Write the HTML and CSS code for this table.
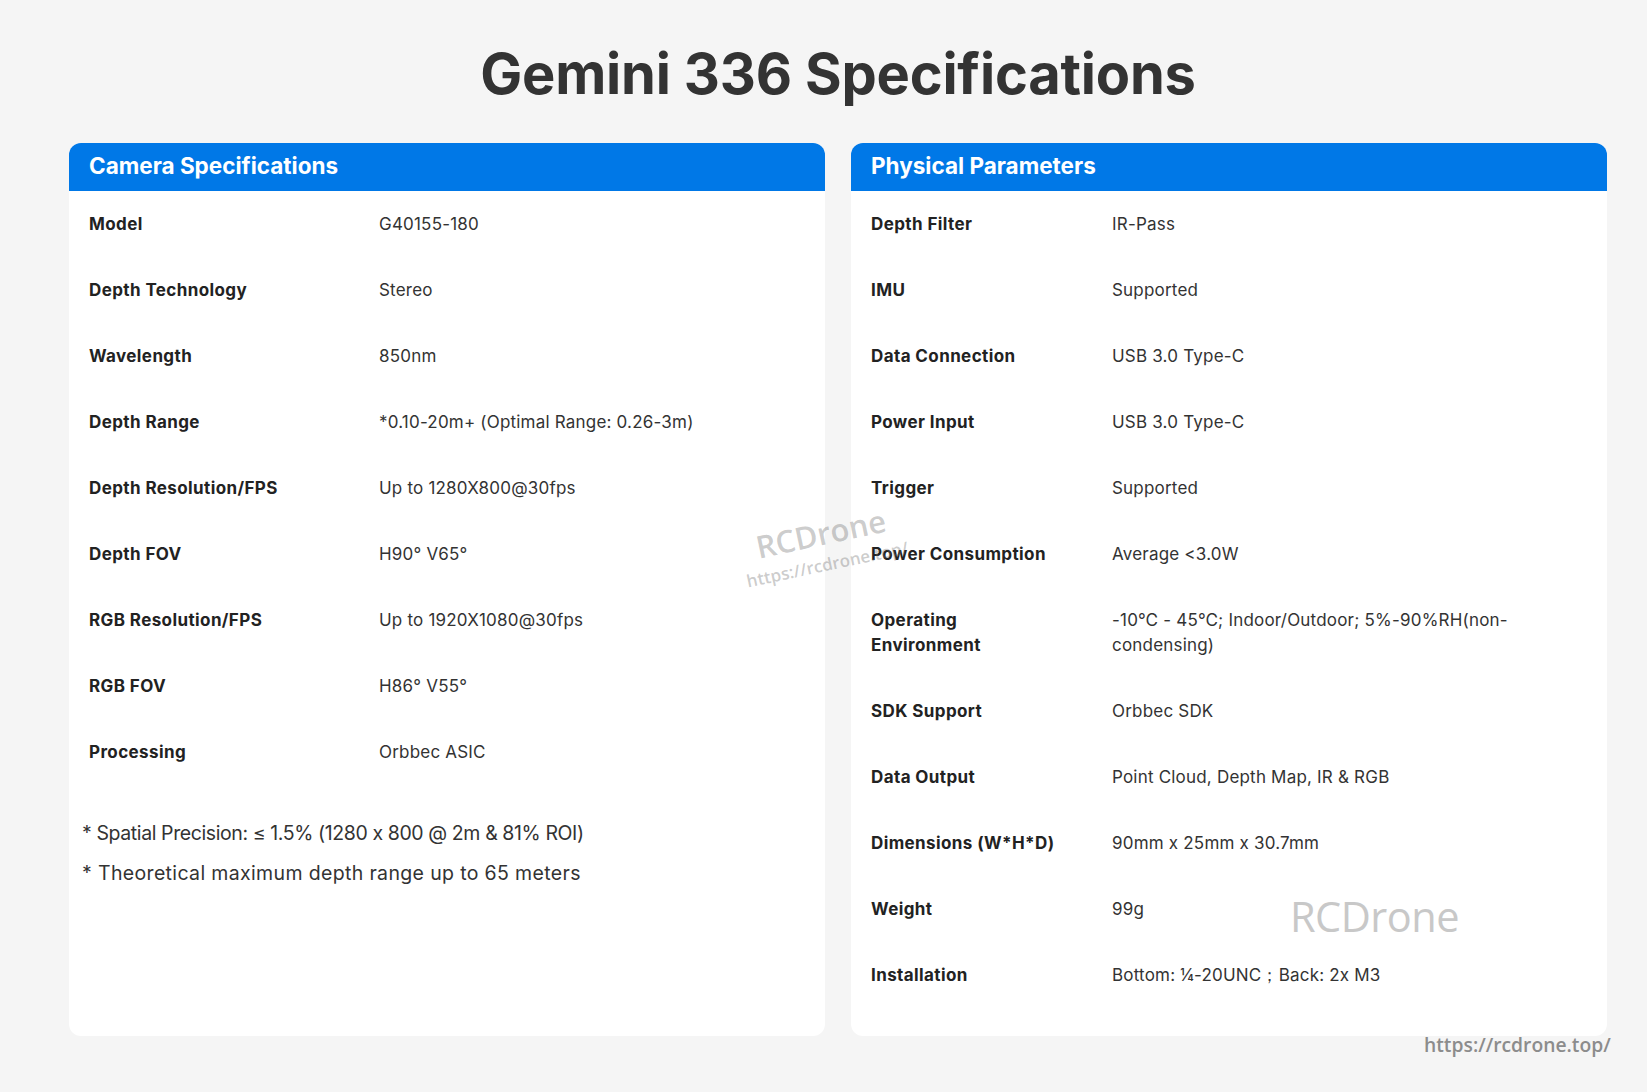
FILE: index.html
```html
<!DOCTYPE html>
<html lang="en">
<head>
<meta charset="utf-8">
<title>Gemini 336 Specifications</title>
<link rel="stylesheet" href="styles.css">
</head>
<body>
<div class="page">
  <h1 class="title">Gemini 336 Specifications</h1>
  <div class="cards">
    <section class="card card-camera">
      <h2 class="card-head">Camera Specifications</h2>
      <div class="spec">
        <div class="row"><div class="label">Model</div><div class="value">G40155-180</div></div>
        <div class="row"><div class="label">Depth Technology</div><div class="value">Stereo</div></div>
        <div class="row"><div class="label">Wavelength</div><div class="value">850nm</div></div>
        <div class="row"><div class="label">Depth Range</div><div class="value">*0.10-20m+ (Optimal Range: 0.26-3m)</div></div>
        <div class="row"><div class="label">Depth Resolution/FPS</div><div class="value">Up to 1280X800@30fps</div></div>
        <div class="row"><div class="label">Depth FOV</div><div class="value">H90° V65°</div></div>
        <div class="row"><div class="label">RGB Resolution/FPS</div><div class="value">Up to 1920X1080@30fps</div></div>
        <div class="row"><div class="label">RGB FOV</div><div class="value">H86° V55°</div></div>
        <div class="row"><div class="label">Processing</div><div class="value">Orbbec ASIC</div></div>
      </div>
      <div class="notes">
        <p class="note note-precision">* Spatial Precision: ≤ 1.5% (1280 x 800 @ 2m &amp; 81% ROI)</p>
        <p class="note note-range">* Theoretical maximum depth range up to 65 meters</p>
      </div>
    </section>
    <section class="card card-physical">
      <h2 class="card-head">Physical Parameters</h2>
      <div class="spec">
        <div class="row"><div class="label">Depth Filter</div><div class="value">IR-Pass</div></div>
        <div class="row"><div class="label">IMU</div><div class="value">Supported</div></div>
        <div class="row"><div class="label">Data Connection</div><div class="value">USB 3.0 Type-C</div></div>
        <div class="row"><div class="label">Power Input</div><div class="value">USB 3.0 Type-C</div></div>
        <div class="row"><div class="label">Trigger</div><div class="value">Supported</div></div>
        <div class="row"><div class="label">Power Consumption</div><div class="value">Average &lt;3.0W</div></div>
        <div class="row"><div class="label">Operating Environment</div><div class="value">-10℃ - 45℃; Indoor/Outdoor; 5%-90%RH(non-condensing)</div></div>
        <div class="row"><div class="label">SDK Support</div><div class="value">Orbbec SDK</div></div>
        <div class="row"><div class="label">Data Output</div><div class="value">Point Cloud, Depth Map, IR &amp; RGB</div></div>
        <div class="row"><div class="label">Dimensions (W*H*D)</div><div class="value">90mm x 25mm x 30.7mm</div></div>
        <div class="row"><div class="label">Weight</div><div class="value">99g</div></div>
        <div class="row"><div class="label">Installation</div><div class="value">Bottom: ¼-20UNC；Back: 2x M3</div></div>
      </div>
    </section>
  </div>
  <div class="wm wm-tilt">
    <span class="wm-tilt-name">RCDrone</span>
    <span class="wm-tilt-url">https://rcdrone.top/</span>
  </div>
  <div class="wm wm-name">RCDrone</div>
  <div class="wm wm-url">https://rcdrone.top/</div>
</div>
</body>
</html>
```
FILE: styles.css
```css
* { box-sizing: border-box; }
html, body { margin: 0; padding: 0; }
body {
  background: #f5f5f5;
  font-family: "Inter", "Open Sans", "DejaVu Sans", sans-serif;
  font-feature-settings: "calt" 0;
  color: #333;
  width: 1647px;
  height: 1092px;
  overflow: hidden;
}
.page {
  position: relative;
  height: 1092px;
  padding: 40px 40px 0 69px;
}
.title {
  margin: 0;
  text-align: center;
  font-size: 56px;
  line-height: 68px;
  font-weight: 700;
  color: #333;
  letter-spacing: -0.2px;
}
.cards {
  display: grid;
  grid-template-columns: 756px 756px;
  gap: 26px;
  margin-top: 35px;
}
.card {
  background: #fff;
  border-radius: 12px;
  overflow: hidden;
  height: 893px;
}
.card-head {
  margin: 0;
  height: 48px;
  display: flex;
  align-items: center;
  padding: 0 20px 3px;
  background: #0078e7;
  color: #fff;
  font-size: 22.5px;
  font-weight: 700;
}
.spec { display: flex; flex-direction: column; }
.row {
  display: grid;
  padding: 20.5px 20px;
  line-height: 25px;
  font-size: 17px;
}
.card-camera .row { grid-template-columns: 290px 1fr; }
.card-physical .row { grid-template-columns: 241px 1fr; }
.label { font-weight: 700; color: #222; padding-right: 20px; letter-spacing: 0.4px; }
.card-physical .label { padding-right: 44px; }
.value { font-weight: 400; color: #333; letter-spacing: 0.2px; }
.card-physical .value { max-width: 460px; }
.notes { padding: 28px 13px 0; }
.note {
  margin: 0;
  font-size: 19.5px;
  line-height: 40px;
  color: #333;
}
.note-precision { letter-spacing: -0.4px; }
.note-range { letter-spacing: 0.35px; }
.wm { position: absolute; font-family: "Open Sans", sans-serif; pointer-events: none; }
.wm-tilt {
  left: 741px;
  top: 516px;
  display: flex;
  flex-direction: column;
  align-items: center;
  transform: rotate(-12deg);
  color: rgba(110,110,110,0.36);
}
.wm-tilt-name { font-size: 31px; line-height: 34px; font-weight: 600; }
.wm-tilt-url { font-size: 17px; line-height: 20px; font-weight: 600; margin-top: 5px; }
.wm-name {
  left: 1290px;
  top: 890px;
  font-size: 41.5px;
  line-height: 52px;
  color: #c8c8c8;
  letter-spacing: -0.5px;
}
.wm-url {
  left: 1424px;
  top: 1032px;
  font-size: 19.3px;
  line-height: 26px;
  font-weight: 600;
  color: #8c8c8c;
}
```
